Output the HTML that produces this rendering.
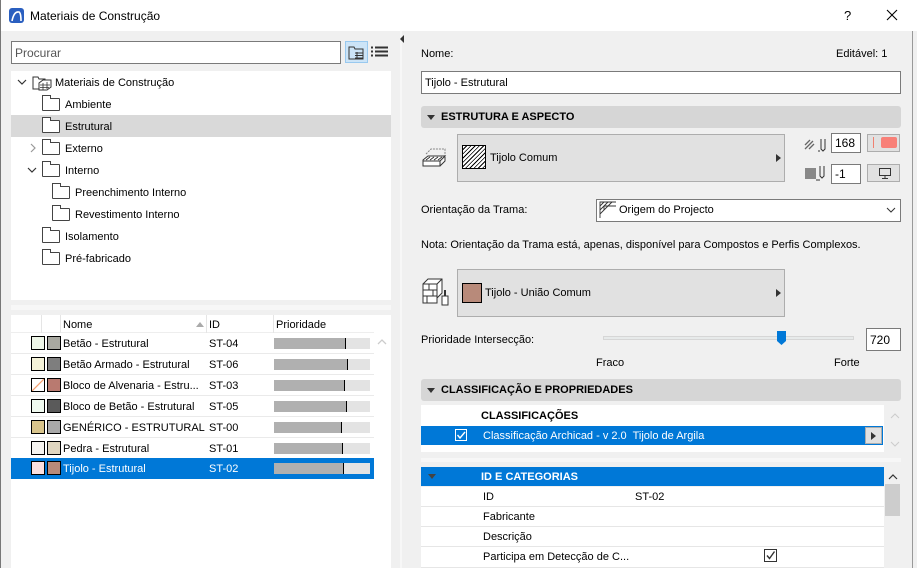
<!DOCTYPE html>
<html><head><meta charset="utf-8"><style>
*{box-sizing:border-box;margin:0;padding:0}
body{width:917px;height:568px;overflow:hidden;background:#f0f0f0;font-family:"Liberation Sans",sans-serif;font-size:11px;color:#000;position:relative}
.a{position:absolute}
.t{position:absolute;white-space:nowrap;line-height:15px}
.b{font-weight:bold}
.folder{position:absolute;width:18px;height:13px;border:1px solid #444;border-radius:1px;background:#fff}
.folder:before{content:"";position:absolute;left:-1px;top:-4px;width:7px;height:3px;border:1px solid #444;border-bottom:none;background:#fff}
.row{position:absolute;left:11px;width:363px;height:21px;background:#fff;border-bottom:1px solid #eaeaea}
.pbar{position:absolute;left:274px;top:5px;width:96px;height:11px;background:#e3e3e3}
.pbar i{position:absolute;left:0;top:0;height:11px;background:#b0b0b0;border-right:1px solid #000}
.sw1{position:absolute;left:20px;top:3px;width:14px;height:14px;border:1px solid #000}
.sw2{position:absolute;left:36px;top:3px;width:14px;height:14px;border:1px solid #000}
.hdr{position:absolute;left:421px;width:480px;height:22px;background:#d6d6d6;border-radius:3px}
.tri{position:absolute;width:0;height:0;border-left:4px solid transparent;border-right:4px solid transparent;border-top:5px solid #333}
.inp{position:absolute;background:#fff;border:1px solid #7a7a7a}
.btn{position:absolute;background:#e1e1e1;border:1px solid #adadad}
.prow{position:absolute;left:421px;width:463px;height:20px;background:#fff;border-bottom:1px solid #e6e6e6}
</style></head><body>
<div class="a" style="left:0;top:0;width:917px;height:31px;background:#fff"></div>
<div class="a" style="left:0;top:0;width:1px;height:568px;background:#777"></div>
<div class="a" style="left:9px;top:8px;width:15px;height:15px;background:#2a5fc0;border-radius:3px"></div>
<svg class="a" style="left:9px;top:8px" width="15" height="15"><path d="M3 13 Q5 3 10 4 Q12 5 12 13" stroke="#fff" stroke-width="1.6" fill="none"/></svg>
<div class="t" style="left:30px;top:9px;font-size:12px">Materiais de Construção</div>
<div class="t" style="left:844px;top:8px;font-size:13px">?</div>
<svg class="a" style="left:886px;top:9px" width="12" height="12"><path d="M1 1L11 11M11 1L1 11" stroke="#000" stroke-width="1.1"/></svg>

<div class="inp" style="left:11px;top:41px;width:330px;height:23px"></div>
<div class="t" style="left:15px;top:46px;color:#555;font-size:12px">Procurar</div>
<div class="a" style="left:345px;top:41px;width:23px;height:22px;background:#cce4f7;border:1px solid #99c9ef"></div>
<svg class="a" style="left:348px;top:45px" width="18" height="16"><path d="M1 2h5l1 2h8v10H1z" fill="none" stroke="#333"/><path d="M7 8h8M7 10.5h8M7 13h8M9 7v7" stroke="#333"/></svg>
<svg class="a" style="left:371px;top:46px" width="17" height="12"><path d="M0 1.5h2M4 1.5h13M0 5.5h2M4 5.5h13M0 9.5h2M4 9.5h13" stroke="#333" stroke-width="2"/></svg>

<div class="a" style="left:11px;top:71px;width:380px;height:229px;background:#fff"></div>
<div class="a" style="left:11px;top:115px;width:380px;height:22px;background:#d9d9d9"></div>
<svg class="a" style="left:17px;top:78px" width="10" height="8"><path d="M1 2l4 4 4-4" stroke="#333" fill="none" stroke-width="1.2"/></svg>
<svg class="a" style="left:32px;top:74px" width="20" height="17"><path d="M1 3h5l1 2h6v10H1z" fill="#fff" stroke="#333"/><path d="M7 9l4-3h8v7l-4 3H7z" fill="#fff" stroke="#333"/><path d="M8 11h10M8 13.5h9M11 9v7M15 8v7" stroke="#333" stroke-width=".8"/></svg>
<div class="t" style="left:55px;top:76px">Materiais de Construção</div>
<div class="folder" style="left:42px;top:98px"></div><div class="t" style="left:65px;top:98px">Ambiente</div>
<div class="folder" style="left:42px;top:120px"></div><div class="t" style="left:65px;top:120px">Estrutural</div>
<svg class="a" style="left:29px;top:143px" width="8" height="10"><path d="M2 1l4 4-4 4" stroke="#999" fill="none" stroke-width="1.2"/></svg>
<div class="folder" style="left:42px;top:142px"></div><div class="t" style="left:65px;top:142px">Externo</div>
<svg class="a" style="left:27px;top:166px" width="10" height="8"><path d="M1 2l4 4 4-4" stroke="#333" fill="none" stroke-width="1.2"/></svg>
<div class="folder" style="left:42px;top:164px"></div><div class="t" style="left:65px;top:164px">Interno</div>
<div class="folder" style="left:52px;top:186px"></div><div class="t" style="left:75px;top:186px">Preenchimento Interno</div>
<div class="folder" style="left:52px;top:208px"></div><div class="t" style="left:75px;top:208px">Revestimento Interno</div>
<div class="folder" style="left:42px;top:230px"></div><div class="t" style="left:65px;top:230px">Isolamento</div>
<div class="folder" style="left:42px;top:252px"></div><div class="t" style="left:65px;top:252px">Pré-fabricado</div>
<div class="a" style="left:11px;top:305px;width:380px;height:5px;background:#f7f7f7"></div>

<div class="a" style="left:11px;top:315px;width:380px;height:253px;background:#fff"></div>
<div class="a" style="left:11px;top:315px;width:363px;height:18px;background:#fff;border-bottom:1px solid #eee"></div>
<div class="a" style="left:41px;top:315px;width:1px;height:18px;background:#e5e5e5"></div>
<div class="a" style="left:60px;top:315px;width:1px;height:18px;background:#e5e5e5"></div>
<div class="a" style="left:206px;top:315px;width:1px;height:18px;background:#e5e5e5"></div>
<div class="a" style="left:273px;top:315px;width:1px;height:18px;background:#e5e5e5"></div>
<div class="t" style="left:63px;top:318px">Nome</div>
<svg class="a" style="left:195px;top:321px" width="10" height="7"><path d="M1 6l4-5 4 5z" fill="#aaa"/></svg>
<div class="t" style="left:209px;top:318px">ID</div>
<div class="t" style="left:276px;top:318px">Prioridade</div>
<svg class="a" style="left:377px;top:339px" width="10" height="7"><path d="M1 5l4-4 4 4" stroke="#ccc" fill="none" stroke-width="1.3"/></svg>

<div class="row" style="top:333px"><div class="sw1" style="background:#eef6e8"></div><div class="sw2" style="background:#a8a8a0"></div><div class="t" style="left:52px;top:4px">Betão - Estrutural</div><div class="t" style="left:198px;top:4px">ST-04</div><div class="pbar" style="left:263px"><i style="width:72px"></i></div></div>
<div class="row" style="top:354px"><div class="sw1" style="background:#f4f2d8"></div><div class="sw2" style="background:#7e7e7e"></div><div class="t" style="left:52px;top:4px">Betão Armado - Estrutural</div><div class="t" style="left:198px;top:4px">ST-06</div><div class="pbar" style="left:263px"><i style="width:74px"></i></div></div>
<div class="row" style="top:375px"><div class="sw1" style="background:linear-gradient(135deg,#fff 45%,#f4a070 48%,#f4a070 52%,#fff 55%)"></div><div class="sw2" style="background:#b97a70"></div><div class="t" style="left:52px;top:4px">Bloco de Alvenaria - Estru...</div><div class="t" style="left:198px;top:4px">ST-03</div><div class="pbar" style="left:263px"><i style="width:71px"></i></div></div>
<div class="row" style="top:396px"><div class="sw1" style="background:#f0faf0"></div><div class="sw2" style="background:#5a5a5a"></div><div class="t" style="left:52px;top:4px">Bloco de Betão - Estrutural</div><div class="t" style="left:198px;top:4px">ST-05</div><div class="pbar" style="left:263px"><i style="width:73px"></i></div></div>
<div class="row" style="top:417px"><div class="sw1" style="background:#d8c48c"></div><div class="sw2" style="background:#a8a8a8"></div><div class="t" style="left:52px;top:4px">GENÉRICO - ESTRUTURAL</div><div class="t" style="left:198px;top:4px">ST-00</div><div class="pbar" style="left:263px"><i style="width:68px"></i></div></div>
<div class="row" style="top:438px"><div class="sw1" style="background:#f6f4f0"></div><div class="sw2" style="background:#e0d6c0"></div><div class="t" style="left:52px;top:4px">Pedra - Estrutural</div><div class="t" style="left:198px;top:4px">ST-01</div><div class="pbar" style="left:263px"><i style="width:69px"></i></div></div>
<div class="row" style="top:458px;background:#0078d7;border:none;height:21px;color:#fff"><div class="sw1" style="background:#fbe0e0"></div><div class="sw2" style="background:#b88a7a"></div><div class="t" style="left:52px;top:4px">Tijolo - Estrutural</div><div class="t" style="left:198px;top:4px">ST-02</div><div class="pbar" style="left:263px"><i style="width:70px"></i></div></div>

<div class="a" style="left:392px;top:31px;width:8px;height:537px;background:#f0f0f0"></div>
<div class="a" style="left:400px;top:31px;width:2px;height:537px;background:#f7f7f7"></div>
<svg class="a" style="left:400px;top:35px" width="5" height="8"><path d="M4 0v8L0 4z" fill="#333"/></svg>
<div class="a" style="left:912px;top:31px;width:1px;height:537px;background:#999"></div>

<div class="t" style="left:421px;top:47px">Nome:</div>
<div class="t" style="left:836px;top:47px">Editável: 1</div>
<div class="inp" style="left:421px;top:71px;width:480px;height:23px"></div>
<div class="t" style="left:425px;top:76px">Tijolo - Estrutural</div>

<div class="hdr" style="top:106px"></div><div class="tri" style="left:427px;top:115px"></div>
<div class="t b" style="left:441px;top:110px">ESTRUTURA E ASPECTO</div>
<svg class="a" style="left:421px;top:146px" width="30" height="25"><path d="M5 8l5-5h14v8" fill="none" stroke="#888" stroke-dasharray="2 1"/><path d="M2 14l5-4h17l-5 5H2zM2 14v6h17v-5M19 20l5-5v-4" fill="#fff" stroke="#333"/><path d="M5 14l4-3M9 14l4-3M13 14l4-3M17 14l4-3" stroke="#333"/></svg>
<div class="btn" style="left:457px;top:134px;width:328px;height:48px"></div>
<div class="a" style="left:462px;top:145px;width:24px;height:24px;border:1px solid #000;background:repeating-linear-gradient(135deg,#fff 0 2px,#000 2px 3px)"></div>
<div class="t" style="left:490px;top:151px">Tijolo Comum</div>
<svg class="a" style="left:776px;top:154px" width="5" height="8"><path d="M0 0l5 4-5 4z" fill="#333"/></svg>
<svg class="a" style="left:804px;top:137px" width="24" height="16"><path d="M1 8l5-5M1 12l8-8M5 12l5-5" stroke="#666" stroke-width="1.3"/><path d="M17 2v10l2 2 2-2V2M14 14h2" stroke="#333" fill="none"/></svg>
<div class="inp" style="left:831px;top:133px;width:30px;height:20px"></div><div class="t" style="left:835px;top:136px;font-size:12px">168</div>
<div class="btn" style="left:867px;top:134px;width:33px;height:18px"></div>
<div class="a" style="left:873px;top:137px;width:1px;height:11px;background:#f08070"></div>
<div class="a" style="left:881px;top:137px;width:16px;height:11px;background:#f88078;border-radius:2px"></div>
<div class="a" style="left:805px;top:168px;width:11px;height:11px;background:#888"></div>
<svg class="a" style="left:816px;top:165px" width="12" height="17"><path d="M4 1v10l2 2 2-2V1M0 15h4" stroke="#333" fill="none"/></svg>
<div class="inp" style="left:831px;top:164px;width:30px;height:20px"></div><div class="t" style="left:835px;top:167px;font-size:12px">-1</div>
<div class="btn" style="left:867px;top:164px;width:33px;height:18px"></div>
<svg class="a" style="left:878px;top:167px" width="14" height="12"><rect x="1.5" y="1.5" width="11" height="7" fill="none" stroke="#333"/><path d="M7 9v2M4 11.5h6" stroke="#333"/></svg>

<div class="t" style="left:421px;top:203px">Orientação da Trama:</div>
<div class="inp" style="left:596px;top:199px;width:305px;height:23px"></div>
<svg class="a" style="left:599px;top:201px" width="18" height="18"><path d="M1 17V1h16M1 5l4-4M1 9l8-8M1 13l12-12M5 9V5h12" stroke="#333" fill="none" stroke-width=".9"/></svg>
<div class="t" style="left:619px;top:203px">Origem do Projecto</div>
<svg class="a" style="left:886px;top:207px" width="10" height="6"><path d="M1 1l4 4 4-4" stroke="#333" fill="none"/></svg>
<div class="t" style="left:421px;top:238px">Nota: Orientação da Trama está, apenas, disponível para Compostos e Perfis Complexos.</div>

<svg class="a" style="left:421px;top:278px" width="30" height="30"><path d="M2 6h14v19H2zM2 6l5-5h14v14l-5 5" fill="#fff" stroke="#333"/><path d="M2 12h14M2 18h14M8 6v6M12 12v6M6 18v7M16 6l5-5" stroke="#333"/><rect x="21" y="18" width="6" height="9" fill="#fff" stroke="#333"/><path d="M24 12v6" stroke="#333" stroke-width="2"/></svg>
<div class="btn" style="left:457px;top:269px;width:328px;height:48px"></div>
<div class="a" style="left:462px;top:283px;width:20px;height:20px;border:1px solid #000;background:#b88a7a"></div>
<div class="t" style="left:485px;top:286px">Tijolo - União Comum</div>
<svg class="a" style="left:776px;top:289px" width="5" height="8"><path d="M0 0l5 4-5 4z" fill="#333"/></svg>

<div class="t" style="left:421px;top:333px">Prioridade Intersecção:</div>
<div class="a" style="left:603px;top:336px;width:251px;height:4px;background:#e7eaea;border:1px solid #d6d6d6"></div>
<svg class="a" style="left:777px;top:331px" width="9" height="14"><path d="M0 0h9v10l-4.5 4L0 10z" fill="#0078d7"/></svg>
<div class="inp" style="left:866px;top:328px;width:35px;height:23px"></div><div class="t" style="left:870px;top:333px;font-size:12px">720</div>
<div class="t" style="left:596px;top:356px">Fraco</div>
<div class="t" style="left:834px;top:356px">Forte</div>

<div class="hdr" style="top:379px"></div><div class="tri" style="left:427px;top:388px"></div>
<div class="t b" style="left:441px;top:383px">CLASSIFICAÇÃO E PROPRIEDADES</div>
<div class="a" style="left:421px;top:405px;width:463px;height:47px;background:#fff"></div>
<div class="t b" style="left:481px;top:409px">CLASSIFICAÇÕES</div>
<svg class="a" style="left:890px;top:413px" width="10" height="6"><path d="M1 5l4-4 4 4" stroke="#ccc" fill="none"/></svg>
<svg class="a" style="left:890px;top:441px" width="10" height="6"><path d="M1 1l4 4 4-4" stroke="#ccc" fill="none"/></svg>
<div class="a" style="left:421px;top:426px;width:462px;height:19px;background:#0078d7"></div>
<div class="a" style="left:455px;top:429px;width:12px;height:12px;border:1px solid #fff"></div>
<svg class="a" style="left:456px;top:430px" width="10" height="10"><path d="M1.5 5l2.5 3 5-6" stroke="#fff" fill="none" stroke-width="1.4"/></svg>
<div class="t" style="left:483px;top:429px;color:#fff">Classificação Archicad - v 2.0&nbsp; Tijolo de Argila</div>
<div class="a" style="left:865px;top:427px;width:17px;height:17px;background:#e1e1e1;border:1px solid #adadad"></div>
<svg class="a" style="left:871px;top:432px" width="5" height="8"><path d="M0 0l5 4-5 4z" fill="#333"/></svg>
<div class="a" style="left:421px;top:458px;width:480px;height:4px;background:#f7f7f7"></div>

<div class="a" style="left:421px;top:467px;width:463px;height:19px;background:#0078d7"></div>
<div class="tri" style="left:428px;top:474px;border-top-color:#444"></div>
<div class="t b" style="left:481px;top:470px;color:#fff">ID E CATEGORIAS</div>
<div class="a" style="left:884px;top:467px;width:17px;height:101px;background:#f0f0f0"></div>
<svg class="a" style="left:888px;top:474px" width="10" height="6"><path d="M1 5l4-4 4 4" stroke="#333" fill="none" stroke-width="1.2"/></svg>
<div class="a" style="left:885px;top:484px;width:15px;height:32px;background:#cdcdcd"></div>
<div class="prow" style="top:487px"><div class="t" style="left:62px;top:3px">ID</div><div class="t" style="left:214px;top:3px">ST-02</div></div>
<div class="prow" style="top:507px"><div class="t" style="left:62px;top:3px">Fabricante</div></div>
<div class="prow" style="top:527px"><div class="t" style="left:62px;top:3px">Descrição</div></div>
<div class="prow" style="top:547px;height:21px"><div class="t" style="left:62px;top:3px">Participa em Detecção de C...</div>
<div class="a" style="left:343px;top:2px;width:13px;height:13px;border:1px solid #333;background:#fff"></div>
<svg class="a" style="left:344px;top:3px" width="11" height="11"><path d="M2 5.5l2.5 3 5-7" stroke="#333" fill="none" stroke-width="1.4"/></svg></div>
</body></html>
